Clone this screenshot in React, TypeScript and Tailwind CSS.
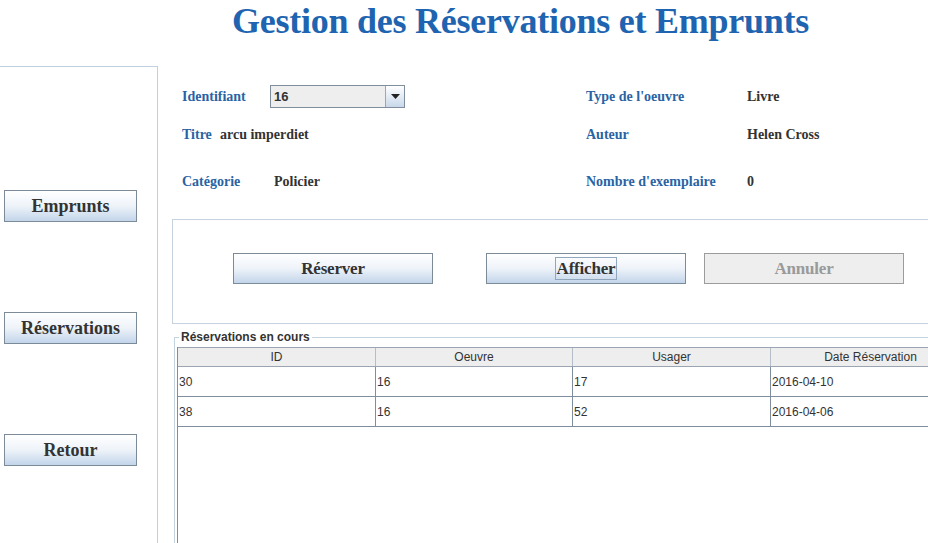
import { ReactNode } from 'react'

const serif = "font-['Liberation_Serif','Times_New_Roman',serif]"
const sans = "font-['Liberation_Sans',Arial,sans-serif]"

const rows = [
  { id: '30', oeuvre: '16', usager: '17', date: '2016-04-10' },
  { id: '38', oeuvre: '16', usager: '52', date: '2016-04-06' },
]

function SideButton({ children }: { children: ReactNode }) {
  return (
    <button
      type="button"
      className={`flex h-[32px] w-[133px] items-center justify-center border border-[#7d8b99] bg-gradient-to-b from-[#ffffff] via-[#eef3f9] to-[#c3d5ea] text-[18px] font-bold text-[#333333] ${serif}`}
    >
      {children}
    </button>
  )
}

function ActionButton({ children, disabled, focused }: { children: ReactNode; disabled?: boolean; focused?: boolean }) {
  return (
    <button
      type="button"
      disabled={disabled}
      className={`flex h-[31px] w-[200px] shrink-0 items-center justify-center border text-[17px] font-bold tracking-[-0.2px] ${serif} ${
        disabled
          ? 'border-[#9c9c9c] bg-[#eeeeee] text-[#9a9a9a]'
          : 'border-[#7d8b99] bg-gradient-to-b from-[#ffffff] via-[#eef3f9] to-[#c3d5ea] text-[#333333]'
      }`}
    >
      <span className={focused ? 'border border-[#8fa6bd] px-[1px] leading-[21px]' : ''}>{children}</span>
    </button>
  )
}

function Label({ children, w }: { children: ReactNode; w: string }) {
  return <span className={`${w} shrink-0 text-[14px] font-bold text-[#2a63a3] ${serif}`}>{children}</span>
}

function Value({ children }: { children: ReactNode }) {
  return <span className={`text-[14px] font-bold text-[#333333] ${serif}`}>{children}</span>
}

export default function App() {
  return (
    <div className="relative h-[543px] w-[928px] overflow-hidden bg-white">
      <div className="h-[66px] pl-[232px]">
        <h1 className={`whitespace-nowrap text-[36px] font-bold leading-[42px] tracking-[-0.25px] text-[#1e64b0] ${serif}`}>
          Gestion des Réservations et Emprunts
        </h1>
      </div>

      <div className="flex h-[477px]">
        <aside className="ml-[-1px] flex h-full w-[159px] shrink-0 flex-col gap-[90px] border-r border-t border-[#c0d0de] pl-[5px] pt-[123px]">
          <SideButton>Emprunts</SideButton>
          <SideButton>Réservations</SideButton>
          <SideButton>Retour</SideButton>
        </aside>

        <main className="flex min-w-0 flex-1 flex-col">
          <div className="flex flex-col pl-[24px] pt-[19px]">
            <div className="flex h-[23px] items-center">
              <div className="flex w-[404px] items-center">
                <Label w="w-[88px]">Identifiant</Label>
                <div className="flex h-[23px] w-[135px] border border-[#7f8d9c] bg-[#eeeeee]">
                  <span className={`flex-1 pl-[3px] text-[13px] font-bold leading-[21px] text-[#333333] ${sans}`}>16</span>
                  <span className="flex w-[19px] items-center justify-center border-l border-[#9aa8b6] bg-gradient-to-b from-[#ffffff] to-[#c8d8ea]">
                    <svg width="9" height="5" viewBox="0 0 9 5">
                      <path d="M0 0h9L4.5 5z" fill="#222" />
                    </svg>
                  </span>
                </div>
              </div>
              <Label w="w-[161px]">Type de l'oeuvre</Label>
              <Value>Livre</Value>
            </div>

            <div className="mt-[15px] flex h-[23px] items-center">
              <div className="flex w-[404px] items-center">
                <Label w="w-[38px]">Titre</Label>
                <Value>arcu imperdiet</Value>
              </div>
              <Label w="w-[161px]">Auteur</Label>
              <Value>Helen Cross</Value>
            </div>

            <div className="mt-[24px] flex h-[23px] items-center">
              <div className="flex w-[404px] items-center">
                <Label w="w-[92px]">Catégorie</Label>
                <Value>Policier</Value>
              </div>
              <Label w="w-[161px]">Nombre d'exemplaire</Label>
              <Value>0</Value>
            </div>
          </div>

          <div className="ml-[14px] mt-[26px] flex h-[105px] w-[800px] shrink-0 items-start gap-[53px] border border-[#c6d3de] pl-[60px] pt-[33px]">
            <ActionButton>Réserver</ActionButton>
            <div className="flex gap-[18px]">
              <ActionButton focused>Afficher</ActionButton>
              <ActionButton disabled>Annuler</ActionButton>
            </div>
          </div>

          <fieldset className="ml-[16px] mt-[6px] w-[800px] flex-1 border-l border-t border-[#c3d3e0] pl-[2px]">
            <legend className={`ml-[2px] px-[2px] text-[12px] font-bold leading-[14px] text-[#333333] ${sans}`}>
              Réservations en cours
            </legend>
            <div className={`mt-[3px] flex h-full flex-col border-l border-[#7f8d9c] text-[12px] text-[#333333] ${sans}`}>
              <div className="grid h-[20px] grid-cols-[198px_197px_198px_200px] border-b border-t border-[#9aa5b1] bg-[#eeeeee]">
                {['ID', 'Oeuvre', 'Usager', 'Date Réservation'].map((h) => (
                  <div key={h} className="flex items-center justify-center border-r border-[#b5bec8] leading-none">
                    {h}
                  </div>
                ))}
              </div>
              {rows.map((r) => (
                <div key={r.id} className="grid h-[30px] grid-cols-[198px_197px_198px_200px] border-b border-[#7f8d9c]">
                  {[r.id, r.oeuvre, r.usager, r.date].map((c, i) => (
                    <div key={i} className="flex items-center border-r border-[#7f8d9c] pl-[1px]">
                      {c}
                    </div>
                  ))}
                </div>
              ))}
            </div>
          </fieldset>
        </main>
      </div>
    </div>
  )
}
